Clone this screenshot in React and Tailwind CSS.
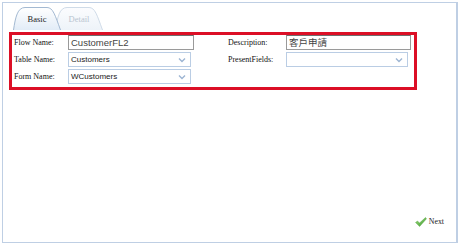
import React from 'react';

const serif = { fontFamily: '"Liberation Serif", "Times New Roman", serif' };

function Tab({ label, active, className }) {
  return (
    <div className={`relative w-[48px] h-[23px] flex items-center justify-center ${className}`}>
      <svg className="absolute inset-0" width="48" height="23" viewBox="0 0 48 23">
        <defs>
          <linearGradient id={`tab-${label}`} x1="0" y1="0" x2="0" y2="1">
            <stop offset="0" stopColor={active ? '#ffffff' : '#fbfcfe'} />
            <stop offset="1" stopColor={active ? '#e2ecf7' : '#eef3f9'} />
          </linearGradient>
        </defs>
        <path
          d="M0.5 23 C2.5 10 4.5 0.5 12 0.5 L34 0.5 C40 0.5 42 8 47.5 23"
          fill={`url(#tab-${label})`}
          stroke={active ? '#a3b9d2' : '#cfdbe8'}
        />
      </svg>
      <span
        className={`relative text-[8.5px] pt-[1px] ${active ? 'text-[#222]' : 'text-[#b9c4d0]'}`}
        style={serif}
      >
        {label}
      </span>
    </div>
  );
}

function Label({ children, className = '' }) {
  return (
    <div className={`text-[8px] text-[#111] leading-none flex items-center ${className}`} style={serif}>
      {children}
    </div>
  );
}

function TextBox({ value, width }) {
  return (
    <div
      className={`${width} h-[15px] border border-[#9a9a9a] border-t-[#6f6f6f] bg-white flex items-center pl-[2px] text-[9.5px] text-[#444] leading-none`}
      style={{ fontFamily: '"Liberation Sans", Arial, "Noto Sans CJK TC", sans-serif' }}
    >
      {value}
    </div>
  );
}

function Select({ value, width }) {
  return (
    <div
      className={`${width} h-[15px] border border-[#bacde4] bg-white flex items-center justify-between pl-[2px] pr-[4px] text-[8px] text-[#1a1a1a] leading-none`}
      style={{ fontFamily: '"Liberation Sans", Arial, sans-serif' }}
    >
      <span>{value}</span>
      <svg width="8" height="6" viewBox="0 0 8 6">
        <path d="M1 1.5 L4 4.5 L7 1.5" fill="none" stroke="#9db5d3" strokeWidth="1.4" />
      </svg>
    </div>
  );
}

export default function App() {
  return (
    <div className="w-[461px] h-[246px] bg-white pt-[2px] pl-[2px]">
      <div className="w-[456px] h-[241px] border border-[#bfcfe4] border-r-2 flex flex-col bg-white">
        <div className="flex pl-[10px] pt-[4px]">
          <Tab label="Basic" active className="z-10" />
          <Tab label="Detail" className="-ml-[6px]" />
        </div>

        <div className="ml-[6px] mt-[2px] w-[408px] h-[58px] border-[3px] border-[#dc0f26] flex">
          <div className="grid grid-cols-[56px_126px] gap-y-[2px] content-start">
            <Label className="pl-[2px]">Flow Name:</Label>
            <TextBox value="CustomerFL2" width="w-[126px]" />
            <Label className="pl-[2px]">Table Name:</Label>
            <Select value="Customers" width="w-[123px]" />
            <Label className="pl-[2px]">Form Name:</Label>
            <Select value="WCustomers" width="w-[123px]" />
          </div>
          <div className="ml-[34px] grid grid-cols-[58px_125px] gap-y-[2px] content-start">
            <Label>Description:</Label>
            <TextBox value="客戶申請" width="w-[125px]" />
            <Label>PresentFields:</Label>
            <Select value="" width="w-[122px]" />
          </div>
        </div>

        <div className="flex-1" />

        <div className="flex justify-end items-center gap-[2px] pr-[12px] pb-[15px]">
          <svg width="12" height="10" viewBox="0 0 12 10">
            <defs>
              <linearGradient id="chk" x1="0" y1="0" x2="1" y2="1">
                <stop offset="0" stopColor="#9fdc7c" />
                <stop offset="1" stopColor="#3d9a2f" />
              </linearGradient>
            </defs>
            <path d="M0.5 5.5 L2.5 4 L4.5 6 L10.5 0.5 L11.5 1.8 L4.6 9.5 Z" fill="url(#chk)" stroke="#4f9e3c" strokeWidth="0.4" />
          </svg>
          <span className="text-[7.8px] text-[#222] leading-none" style={serif}>Next</span>
        </div>
      </div>
    </div>
  );
}
